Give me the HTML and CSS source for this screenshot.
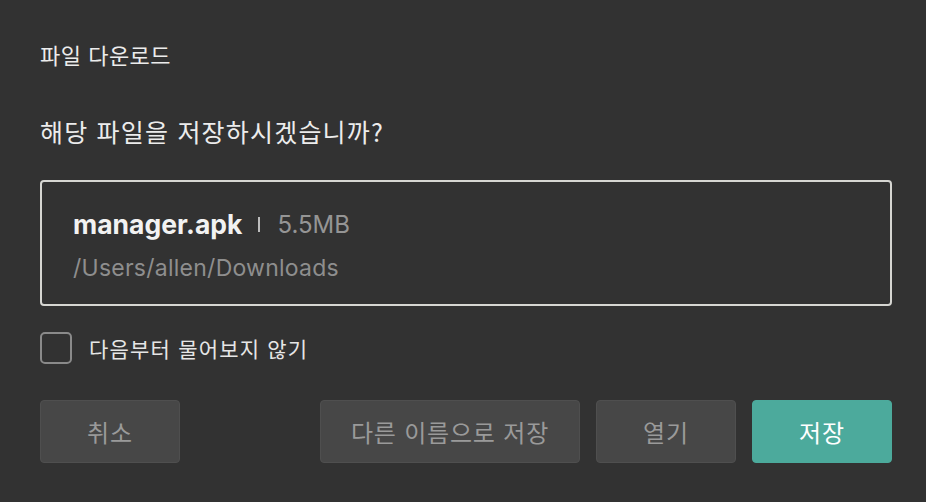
FILE: index.html
```html
<!DOCTYPE html>
<html lang="ko">
<head>
<meta charset="utf-8">
<link rel="stylesheet" href="styles.css">
</head>
<body>
<div class="dialog">
  <div class="title">파일 다운로드</div>
  <div class="question">해당 파일을 저장하시겠습니까?</div>
  <div class="card">
    <div class="file-line">
      <span class="file-name">manager.apk</span>
      <span class="sep"></span>
      <span class="file-size">5.5MB</span>
    </div>
    <div class="file-path">/Users/allen/Downloads</div>
  </div>
  <label class="check-row">
    <span class="checkbox"></span>
    <span class="check-label">다음부터 물어보지 않기</span>
  </label>
  <div class="actions">
    <button class="btn btn-small">취소</button>
    <div class="spacer"></div>
    <button class="btn btn-wide">다른 이름으로 저장</button>
    <button class="btn btn-small">열기</button>
    <button class="btn btn-small btn-primary">저장</button>
  </div>
</div>
</body>
</html>
```

FILE: styles.css
```css
html, body {
  margin: 0;
  padding: 0;
  background: #323232;
  width: 926px;
  height: 502px;
  overflow: hidden;
}

.dialog {
  box-sizing: border-box;
  width: 926px;
  height: 502px;
  padding: 40px 34px 0 40px;
  font-family: Inter, "Noto Sans CJK KR", sans-serif;
  color: #ececec;
}

.title {
  font-family: "Noto Sans CJK KR", sans-serif;
  font-size: 22px;
  letter-spacing: 0.5px;
  line-height: 28px;
  color: #ececec;
}

.question {
  margin-top: 47px;
  font-family: "Noto Sans CJK KR", sans-serif;
  font-size: 25px;
  letter-spacing: 1.2px;
  line-height: 32px;
  color: #ececec;
}

.card {
  margin-top: 33px;
  box-sizing: border-box;
  height: 126px;
  border: 2px solid #d6d6d2;
  border-radius: 4px;
  padding: 26px 30px 20px 31px;
}

.file-line {
  display: flex;
  align-items: center;
  height: 32px;
}

.file-name {
  font-family: Inter, sans-serif;
  font-weight: 700;
  font-size: 26.5px;
  color: #f2f2f2;
}

.sep {
  width: 2px;
  height: 15px;
  background: #bdbdbd;
  margin: 0 17px 0 16px;
}

.file-size {
  font-family: Inter, sans-serif;
  font-size: 24px;
  color: #959595;
}

.file-path {
  margin-top: 12px;
  font-family: Inter, sans-serif;
  font-size: 23px;
  letter-spacing: 0.25px;
  line-height: 32px;
  color: #8e8e8e;
}

.check-row {
  margin-top: 26px;
  display: flex;
  align-items: center;
  height: 32px;
}

.checkbox {
  box-sizing: border-box;
  width: 32px;
  height: 32px;
  border: 2px solid #8a8a8a;
  border-radius: 5px;
}

.check-label {
  margin-left: 17px;
  font-family: "Noto Sans CJK KR", sans-serif;
  font-size: 21px;
  letter-spacing: 1.2px;
  color: #e6e6e6;
}

.actions {
  margin-top: 36px;
  display: flex;
  gap: 16px;
}

.spacer {
  flex: 1;
}

.btn {
  box-sizing: border-box;
  height: 63px;
  border: 1px solid #4f4f4f;
  border-radius: 4px;
  background: #474747;
  color: #9a9a9a;
  font-family: "Noto Sans CJK KR", sans-serif;
  font-size: 24px;
  letter-spacing: 0.8px;
  padding: 0;
  margin: 0;
}

.btn-small {
  width: 140px;
}

.btn-wide {
  width: 260px;
}

.btn-primary {
  background: #4caa9c;
  border-color: #4caa9c;
  color: #ffffff;
}
```
